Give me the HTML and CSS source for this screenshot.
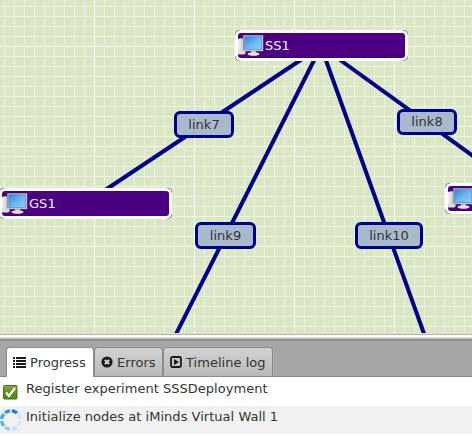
FILE: index.html
```html
<!DOCTYPE html>
<html lang="en">
<head>
<meta charset="utf-8">
<title>Experiment</title>
<link rel="stylesheet" href="styles.css">
</head>
<body>
<svg class="defs" width="0" height="0">
  <defs>
    <linearGradient id="screen" x1="0" y1="0" x2="1" y2="1"><stop offset="0" stop-color="#2f86d8"/><stop offset=".5" stop-color="#6bb5f2"/><stop offset="1" stop-color="#8fd0fb"/></linearGradient>
    <linearGradient id="tower" x1="0" y1="0" x2="1" y2="0"><stop offset="0" stop-color="#f4f4f4"/><stop offset="1" stop-color="#b5b5b5"/></linearGradient>
    <linearGradient id="green" x1="0" y1="0" x2="0" y2="1"><stop offset="0" stop-color="#8aa653"/><stop offset=".5" stop-color="#5f9416"/><stop offset="1" stop-color="#4f8a08"/></linearGradient>
    <symbol id="pc" viewBox="0 0 26 22">
      <path d="M0 4l4-1 1 1v11h2v3.500H0z" fill="url(#tower)"/>
      <path d="M0 16h7l1 2-2 1.500H0z" fill="#dcdcdc"/>
      <path d="M5.500 .5h19.500v15.500H5.500z" fill="#dad6cc" stroke="#aaa" stroke-width=".5"/>
      <path d="M6.700 1.700h17v13H6.700z" fill="url(#screen)" stroke="#2c6eb0" stroke-width=".5"/>
      <path d="M13 16h5v2.500h-5z" fill="#bbb"/>
      <ellipse cx="15.500" cy="19" rx="6" ry="1.800" fill="#e6e6e6"/>
    </symbol>
  </defs>
</svg>
<main class="app">
  <section class="canvas">
    <svg class="links" width="472" height="333" viewBox="0 0 472 333">
      <path d="M321 46.500L88 201.500M321 46.500L170 346M321 46.500L429.500 349M321.500 46.500L532 198.500"/>
    </svg>
    <div class="node ss1"><svg class="pc"><use href="#pc"/></svg><span>SS1</span></div>
    <div class="node gs1"><svg class="pc"><use href="#pc"/></svg><span>GS1</span></div>
    <div class="node gs2"><svg class="pc"><use href="#pc"/></svg></div>
    <div class="link l7">link7</div>
    <div class="link l8">link8</div>
    <div class="link l9">link9</div>
    <div class="link l10">link10</div>
  </section>
  <div class="divider"></div>
  <nav class="tabs">
    <div class="tab active">
      <svg width="13" height="11" viewBox="0 0 13 11"><path d="M0 0h2v2H0zM3 0h10v2H3zM0 3h2v2H0zM3 3h10v2H3zM0 6h2v2H0zM3 6h10v2H3zM0 9h2v2H0zM3 9h10v2H3z" fill="#1a1a1a"/></svg>
      <span>Progress</span>
    </div>
    <div class="tab errors">
      <svg width="12" height="12" viewBox="0 0 12 12"><circle cx="6" cy="6" r="5.600" fill="#1a1a1a"/><path d="M3.800 3.800l4.400 4.400M8.200 3.800L3.800 8.200" stroke="#ddd" stroke-width="1.900"/></svg>
      <span>Errors</span>
    </div>
    <div class="tab timeline">
      <svg width="12" height="12" viewBox="0 0 12 12"><rect x="1" y="1" width="10" height="10" rx="1.500" fill="none" stroke="#1a1a1a" stroke-width="1.800"/><path d="M4 3l5 3-5 3z" fill="#1a1a1a"/></svg>
      <span>Timeline log</span>
    </div>
  </nav>
  <div class="rows">
    <div class="row">
      <svg class="check" width="15" height="15" viewBox="0 0 15 15"><rect x=".5" y=".5" width="13.500" height="13.500" rx="1" fill="url(#green)" stroke="#4b6b1c"/><path d="M3 7.500l3 3.500 6-8" fill="none" stroke="#fff" stroke-width="2.200"/></svg>
      <span>Register experiment SSSDeployment</span>
    </div>
    <div class="row alt">
      <svg class="spinner" width="22" height="24" viewBox="-.1 .9 20.200 22.200"><g fill="none" stroke-width="3">
        <path d="M10.800 3.500A8.700 8.700 0 0 1 15.500 5.500" stroke="#1878d0"/>
        <path d="M16.500 6.500A8.700 8.700 0 0 1 18.500 11" stroke="#cfe6fb"/>
        <path d="M18.600 13A8.700 8.700 0 0 1 16.500 17.500" stroke="#d6eafc"/>
        <path d="M15.300 18.800A8.700 8.700 0 0 1 11 20.700" stroke="#c0e0fd"/>
        <path d="M9 20.700A8.700 8.700 0 0 1 4.500 18.800" stroke="#90c8fc"/>
        <path d="M3.300 17.500A8.700 8.700 0 0 1 1.300 13" stroke="#60b0f8"/>
        <path d="M1.300 11A8.700 8.700 0 0 1 3.300 6.500" stroke="#48a4f8"/>
        <path d="M4.500 5.300A8.700 8.700 0 0 1 9 3.500" stroke="#2890f0"/>
      </g></svg>
      <span>Initialize nodes at iMinds Virtual Wall 1</span>
    </div>
  </div>
</main>
</body>
</html>
```
FILE: styles.css
```css
body { margin: 0; background: #fff; font: 13px "DejaVu Sans", sans-serif; letter-spacing: .025px; color: #333; overflow: hidden; }
.defs { position: absolute; }
.app { width: 472px; height: 436px; display: flex; flex-direction: column; }
.canvas {
  position: relative; height: 333px; flex: none; overflow: hidden;
  background-color: #d9e7c5;
  background-image:
    linear-gradient(90deg, #fff 1px, transparent 1px), linear-gradient(#fff 1px, transparent 1px),
    linear-gradient(90deg, #ecf3e2 1px, transparent 1px), linear-gradient(#ecf3e2 1px, transparent 1px);
  background-size: 100px 100px, 100px 100px, 10px 10px, 10px 10px;
  background-position: 94px 0, 0 46px, 4px 0, 0 6px;
}
.links { position: absolute; left: 0; top: 0; fill: none; stroke: #00008b; stroke-width: 4; }
.node {
  position: absolute; box-sizing: border-box; width: 173px; height: 31px; padding: 0 3px;
  border-radius: 5px; background: #4b0082; color: #f4f0f8;
  display: flex; align-items: center; gap: 1px;
}
.node::before { content: ""; position: absolute; inset: 0; border: 3px solid #fff; border-radius: 6px; }
.ss1 { left: 235px; top: 30px; }
.gs1 { left: -1px; top: 188px; }
.gs2 { left: 445px; top: 183px; }
.pc { width: 26px; height: 22px; flex: none; }
.link {
  position: absolute; box-sizing: border-box; width: 60px; height: 27px; line-height: 21px;
  border: 3px solid #00008b; border-radius: 6px; background: #a9b9cd; text-align: center;
}
.l7 { left: 174px; top: 111px; }
.l8 { left: 397px; top: 109px; height: 26px; line-height: 20px; }
.l9 { left: 195px; top: 222px; width: 61px; }
.l10 { left: 355px; top: 222px; width: 68px; }
.divider { height: 9px; flex: none; background: linear-gradient(#d9e7c5 1px, #b5b5b5 1px 2px, #fff 2px 4px, #ddd 4px 5px, #c4c4c4 5px 6px, #8d8d8d 6px 8px, #a6a6a6 8px); }
.tabs { height: 35px; flex: none; box-sizing: border-box; padding: 5px 0 0 6px; display: flex; background: #a6a6a6; border-bottom: 1px solid #8a8a8a; }
.tab { box-sizing: border-box; height: 29px; display: flex; align-items: center; gap: 4px; padding-left: 6px; border: 1px solid #8c8c8c; border-bottom: 0; border-radius: 4px 4px 0 0; background: linear-gradient(#d2d2d2, #b8b8b8); }
.tab.active { width: 88px; height: 30px; background: #fff; }
.errors { width: 69px; }
.timeline { width: 110px; }
.row { height: 29px; display: flex; align-items: flex-start; line-height: 23px; }
.row.alt { height: 28px; line-height: 22px; background: #f1f1f1; }
.check { margin: 8px 8px 0 3px; }
.spinner { margin: 2px 4px 0 0; }
```
